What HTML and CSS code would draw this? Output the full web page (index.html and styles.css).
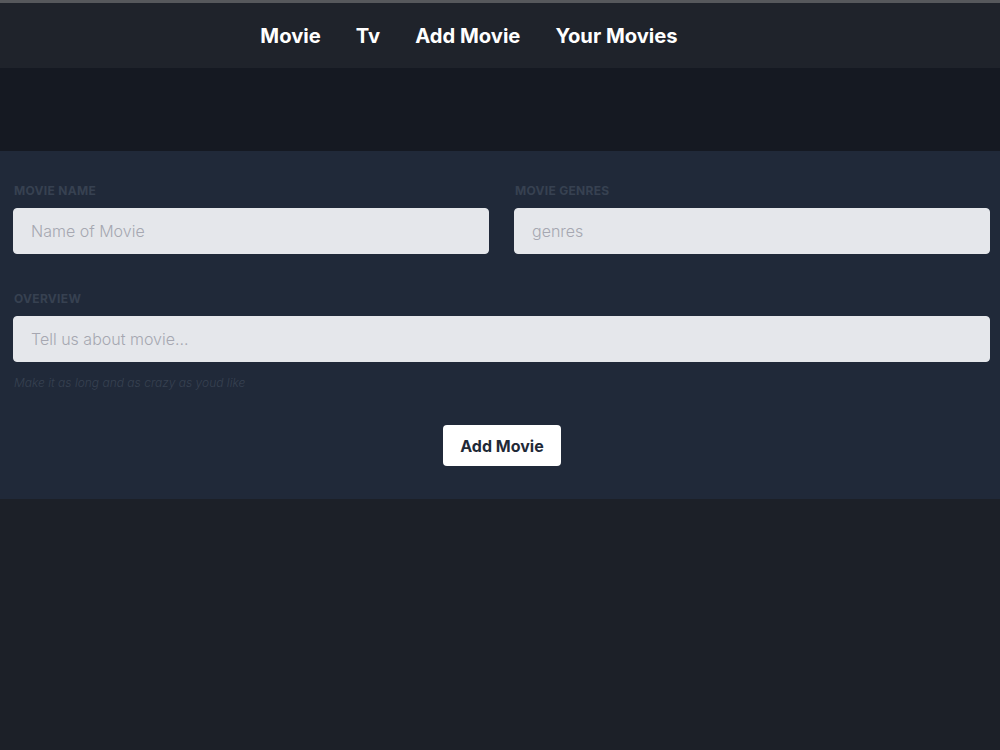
FILE: index.html
```html
<!DOCTYPE html>
<html lang="en">

<head>
    <meta charset="UTF-8" />
    <meta name="viewport" content="width=device-width, initial-scale=1" />
    <title>Add Movie</title>
    <link rel="stylesheet" href="styles.css">
</head>

<body>
    <div class="top-strip"></div>
    <nav class="navbar">
        <a href="#" class="nav-link">Movie</a>
        <a href="#" class="nav-link">Tv</a>
        <a href="#" class="nav-link">Add Movie</a>
        <a href="#" class="nav-link">Your Movies</a>
    </nav>

    <div class="banner"></div>

    <section class="form-wrap">
        <form id="movie-form">
            <div class="form-row">
                <div class="form-group">
                    <label for="movie-name">Movie Name</label>
                    <input id="movie-name" type="text" placeholder="Name of Movie" />
                </div>
                <div class="form-group">
                    <label for="movie-genres">Movie Genres</label>
                    <input id="movie-genres" type="text" placeholder="genres" />
                </div>
            </div>

            <div class="form-group overview">
                <label for="overview">Overview</label>
                <input id="overview" type="text" placeholder="Tell us about movie..." />
                <p class="help">Make it as long and as crazy as youd like</p>
            </div>

            <div class="actions">
                <button type="button">Add Movie</button>
            </div>
        </form>
    </section>
</body>

</html>
```

FILE: styles.css
```css
* {
    margin: 0;
    padding: 0;
    box-sizing: border-box;
}

body {
    font-family: 'Inter', 'Liberation Sans', Arial, sans-serif;
    background: #1c2028;
    min-height: 100vh;
    color: #e0e0e0;
}

.top-strip {
    height: 3px;
    background: #56585c;
}

.navbar {
    height: 65px;
    background: #1f232b;
    display: flex;
    align-items: center;
    justify-content: center;
    gap: 35px;
    padding-right: 62px;
}

.nav-link {
    color: #ffffff;
    text-decoration: none;
    font-size: 20.2px;
    font-weight: 700;
}

.banner {
    height: 83px;
    background: #151922;
}

.form-wrap {
    background: #202939;
    padding: 32px 10px 33px 13px;
}

.form-row {
    display: grid;
    grid-template-columns: 1fr 1fr;
    gap: 25px;
}

.form-group {
    margin-bottom: 37px;
}

.form-group.overview {
    margin-bottom: 0;
}

label {
    display: block;
    margin-bottom: 9px;
    padding-left: 1px;
    font-size: 12px;
    line-height: 16px;
    font-weight: 700;
    color: #374151;
    text-transform: uppercase;
    letter-spacing: 0.3px;
}

input {
    display: block;
    width: 100%;
    height: 46px;
    padding: 0 17px;
    background: #e5e7eb;
    border: 1px solid #e5e7eb;
    border-radius: 4px;
    color: #374151;
    font-family: inherit;
    font-size: 16px;
    outline: none;
}

input::placeholder {
    color: #a6a7b1;
    font-weight: 300;
}

.help {
    margin-top: 13px;
    padding-left: 1px;
    font-size: 12px;
    line-height: 16px;
    font-style: italic;
    font-weight: 300;
    color: #374151;
}

.actions {
    display: flex;
    justify-content: center;
    margin-top: 34px;
    padding-left: 1px;
}

button {
    height: 41px;
    padding: 0 17px;
    background: #ffffff;
    border: none;
    border-radius: 4px;
    color: #1f2937;
    font-family: inherit;
    font-size: 16px;
    font-weight: 700;
    cursor: pointer;
}
```
